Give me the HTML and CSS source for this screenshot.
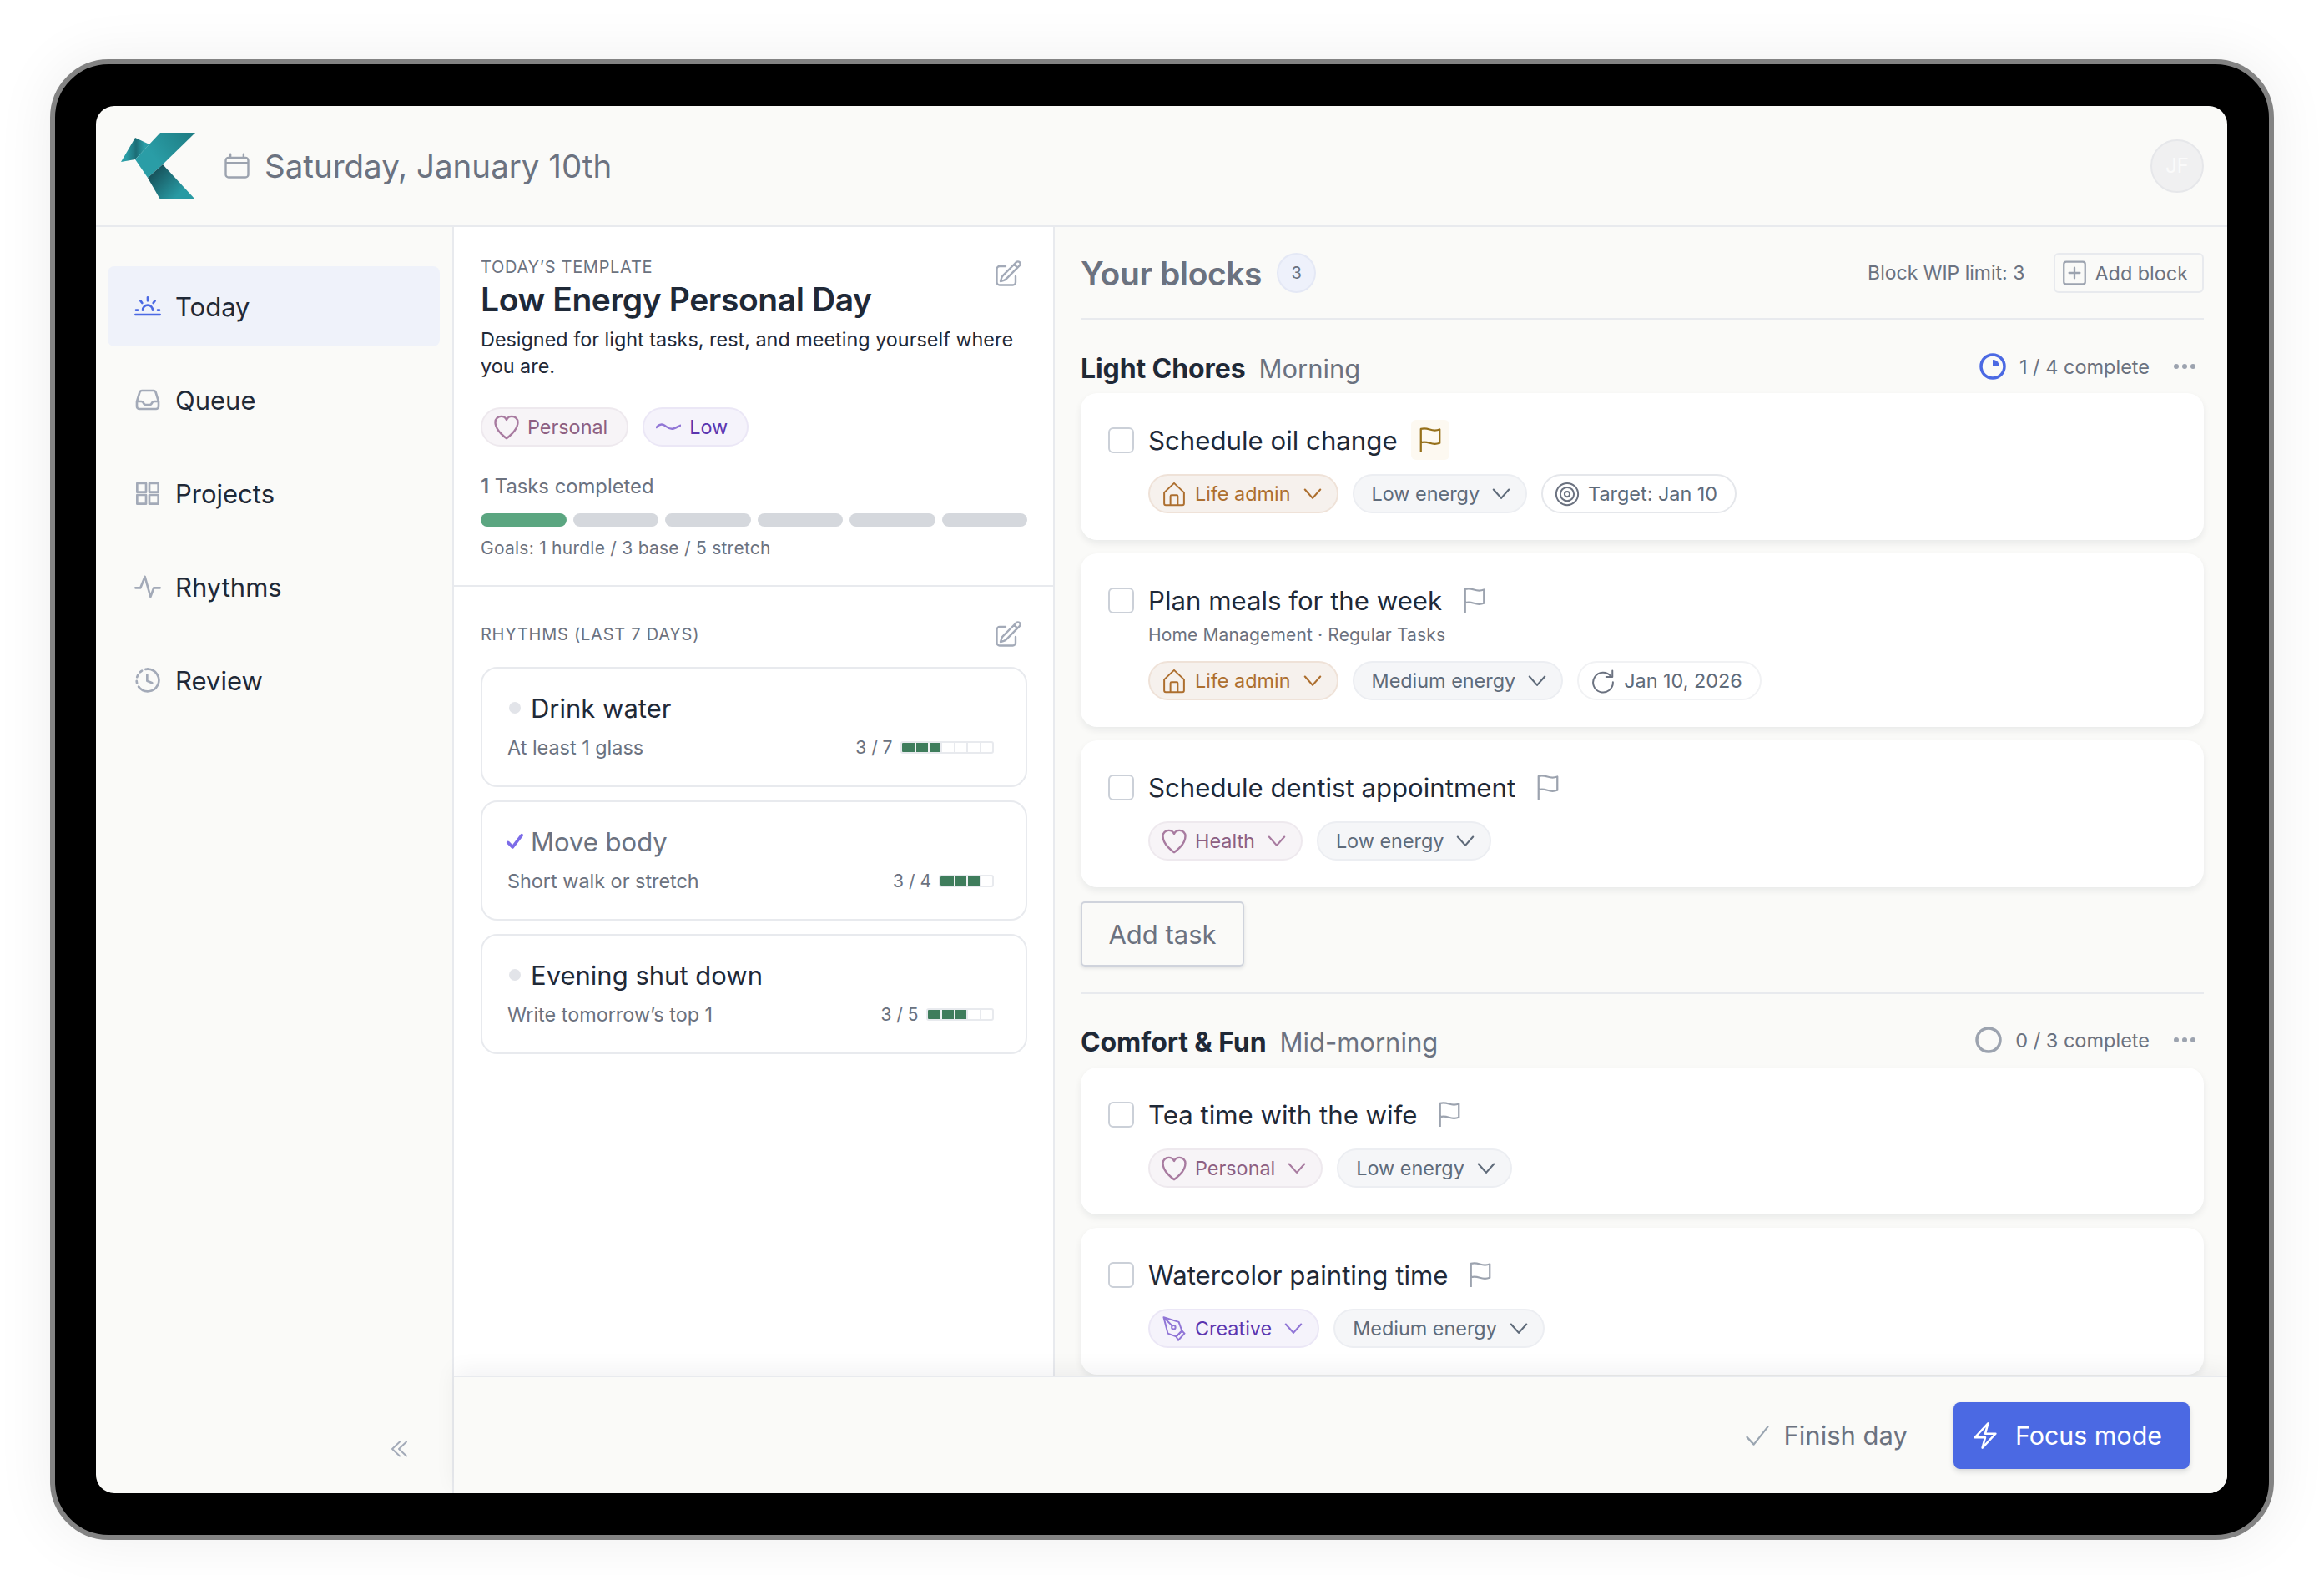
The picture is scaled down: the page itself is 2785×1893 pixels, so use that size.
FILE: index.html
```html
<!DOCTYPE html>
<html lang="en">
<head>
    <meta charset="UTF-8">
    <meta name="viewport" content="width=device-width, initial-scale=1.0">
    <title>Today</title>
    <link rel="stylesheet" href="styles.css">
</head>
<body>

    <!-- Shared icons -->
    <svg class="sprite" xmlns="http://www.w3.org/2000/svg">
        <symbol id="i-calendar" viewBox="0 0 24 24"><path d="M6.75 2.5v2.75M17.25 2.5v2.75M3 18.75V7.5a2.25 2.25 0 012.25-2.25h13.5A2.25 2.25 0 0121 7.5v11.25A2.25 2.25 0 0118.75 21H5.25A2.25 2.25 0 013 18.75zM3 9.5h18"/></symbol>
        <symbol id="i-edit" viewBox="0 0 24 24"><path d="M16.862 4.487l1.687-1.688a1.875 1.875 0 112.652 2.652L10.582 16.07a4.5 4.5 0 01-1.897 1.13L6 18l.8-2.685a4.5 4.5 0 011.13-1.897l8.932-8.931zm0 0L19.5 7.125M18 14v4.75A2.25 2.25 0 0115.75 21H5.25A2.25 2.25 0 013 18.75V8.25A2.25 2.25 0 015.25 6H10"/></symbol>
        <symbol id="i-heart" viewBox="2 2.5 20 20"><path d="M21 8.25c0-2.485-2.099-4.5-4.688-4.5-1.935 0-3.597 1.126-4.312 2.733-.715-1.607-2.377-2.733-4.313-2.733C5.1 3.75 3 5.765 3 8.25c0 7.22 9 13 9 13s9-5.78 9-13z"/></symbol>
        <symbol id="i-wave" viewBox="2 2.5 20 20"><path d="M2.5 12.5c2-2.5 4-3 6.5-1.5s4 3.5 7 2.5c2-.5 3.5-1.5 5.5-2.5"/></symbol>
        <symbol id="i-flag" viewBox="0 0 24 24"><path d="M3 23.5V1.5c3-1 5.500-.5 8.500.5s5.500 1.500 9.500 0V15c-4 1.500-6.500 1-9.500 0s-5.500-1.500-8.500-.5"/></symbol>
        <symbol id="i-home" viewBox="0 0 24 24"><path d="M2.5 10.5L12 1.500l9.500 9V21a1.500 1.500 0 01-1.500 1.500H4A1.500 1.500 0 012.500 21zM8.500 22.500V14a1 1 0 011-1h5a1 1 0 011 1v8.500"/></symbol>
        <symbol id="i-chevron" viewBox="0 0 24 24"><path d="M3.5 7l8.500 9.500L20.500 7"/></symbol>
        <symbol id="i-target" viewBox="0 0 24 24"><circle cx="12" cy="12" r="10.5"/><circle cx="12" cy="12" r="6.5"/><circle cx="12" cy="12" r="2.5"/></symbol>
        <symbol id="i-repeat" viewBox="0 0 24 24"><path d="M19.5 7.500A9.500 9.500 0 1021.500 13M21 2v6h-6"/></symbol>
        <symbol id="i-nib" viewBox="0 0 24 24"><path d="M2 1l14.500 4.500 3 8.500-5.500 5.500-8-3zM2 1l8 8"/><circle cx="11.5" cy="10.5" r="1.8"/><path d="M14 19.500l5.500-5.500 2.500 2.500-6 6.500z"/></symbol>
    </svg>

    <div class="device">
        <div class="screen">

            <header class="topbar">
                <svg class="logo" viewBox="0 0 90 80" xmlns="http://www.w3.org/2000/svg">
                    <defs>
                        <linearGradient id="logo-top" x1="80" y1="0" x2="40" y2="30" gradientUnits="userSpaceOnUse">
                            <stop offset="0" stop-color="#1f7f86"/>
                            <stop offset="1" stop-color="#2a9da6"/>
                        </linearGradient>
                        <linearGradient id="logo-low" x1="38" y1="45" x2="68" y2="75" gradientUnits="userSpaceOnUse">
                            <stop offset="0" stop-color="#164f58"/>
                            <stop offset="1" stop-color="#289aa3"/>
                        </linearGradient>
                        <linearGradient id="logo-fold" x1="6" y1="20" x2="28" y2="20" gradientUnits="userSpaceOnUse">
                            <stop offset="0" stop-color="#2a9da6"/>
                            <stop offset=".55" stop-color="#1c6d76"/>
                            <stop offset="1" stop-color="#2a9da6"/>
                        </linearGradient>
                    </defs>
                    <polygon points="0,35 17,6 34,14 17,32" fill="url(#logo-fold)"/>
                    <polygon points="47,0 89,0 50,38 32,54 17,32" fill="url(#logo-top)"/>
                    <polygon points="50,38 89,80 47,80 32,54" fill="url(#logo-low)"/>
                </svg>
                <svg class="icon date-icon"><use href="#i-calendar"/></svg>
                <span class="date">Saturday, January 10th</span>
                <div class="avatar">JF</div>
            </header>

            <div class="workspace">
                <nav class="sidebar">
                    <a class="nav-item active" href="#">
                        <svg class="nav-icon" viewBox="0 0 24 24"><path d="M1 19.5h22M7.500 15.500a4.500 4.500 0 019 0M12 4v3M5.500 7l1.500 2M18.500 7L17 9M1.500 15.500h1.500M21 15.500h1.500"/></svg>
                        Today
                    </a>
                    <a class="nav-item" href="#">
                        <svg class="nav-icon" viewBox="0 0 24 24"><path d="M2.25 13.5h3.86a2.25 2.25 0 012.012 1.244l.256.512a2.25 2.25 0 002.013 1.244h3.218a2.25 2.25 0 002.013-1.244l.256-.512a2.25 2.25 0 012.013-1.244h3.859m-19.5.338V18a2.25 2.25 0 002.25 2.25h15A2.25 2.25 0 0021.75 18v-4.162c0-.224-.034-.447-.1-.661L19.24 5.338A2.25 2.25 0 0017.088 3.75H6.912a2.25 2.25 0 00-2.15 1.588L2.35 13.177a2.25 2.25 0 00-.1.661z"/></svg>
                        Queue
                    </a>
                    <a class="nav-item" href="#">
                        <svg class="nav-icon" viewBox="0 0 24 24"><rect x="2.5" y="3" width="8" height="8"/><rect x="13.5" y="3" width="8" height="8"/><rect x="2.5" y="13.5" width="8" height="8"/><rect x="13.5" y="13.5" width="8" height="8"/></svg>
                        Projects
                    </a>
                    <a class="nav-item" href="#">
                        <svg class="nav-icon" viewBox="0 0 24 24"><path d="M1 13h4.500L9.500 3l5 18 3-8H23"/></svg>
                        Rhythms
                    </a>
                    <a class="nav-item" href="#">
                        <svg class="nav-icon" viewBox="0 0 24 24"><path d="M12 2a10 10 0 11-8 16"/><path class="dashed" d="M12 2a10 10 0 00-8 16"/><path d="M11.5 7v5.500l4.500 2"/></svg>
                        Review
                    </a>
                    <button class="collapse" type="button">
                        <svg viewBox="0 0 24 24"><path d="M20 20.5l-9-8.500 9-8.500M12 20.500L3 12l9-8.500"/></svg>
                    </button>
                </nav>

                <div class="content">
                    <div class="panels">

                        <aside class="template">
                            <section class="template-top">
                                <div class="label-row">
                                    <span class="label">TODAY&rsquo;S TEMPLATE</span>
                                    <svg class="icon edit-icon"><use href="#i-edit"/></svg>
                                </div>
                                <h1 class="template-title">Low Energy Personal Day</h1>
                                <p class="template-desc">Designed for light tasks, rest, and meeting yourself where you are.</p>
                                <div class="chips">
                                    <span class="chip chip-personal chip-plain"><svg class="chip-icon"><use href="#i-heart"/></svg>Personal</span>
                                    <span class="chip chip-creative chip-plain"><svg class="chip-icon"><use href="#i-wave"/></svg>Low</span>
                                </div>
                                <p class="tasks-done"><strong>1</strong> Tasks completed</p>
                                <div class="goal-bar">
                                    <span class="goal done"></span>
                                    <span class="goal"></span>
                                    <span class="goal"></span>
                                    <span class="goal"></span>
                                    <span class="goal"></span>
                                    <span class="goal"></span>
                                </div>
                                <p class="goals-note">Goals: 1 hurdle / 3 base / 5 stretch</p>
                            </section>

                            <section class="rhythms">
                                <div class="label-row rhythms-head">
                                    <span class="label label-wide">RHYTHMS (LAST 7 DAYS)</span>
                                    <svg class="icon edit-icon"><use href="#i-edit"/></svg>
                                </div>

                                <div class="rhythm">
                                    <div class="rhythm-title"><span class="rhythm-dot"></span>Drink water</div>
                                    <div class="rhythm-foot">
                                        <span class="rhythm-sub">At least 1 glass</span>
                                        <span class="rhythm-count">3 / 7</span>
                                        <span class="cells"><i class="on"></i><i class="on"></i><i class="on"></i><i></i><i></i><i></i><i></i></span>
                                    </div>
                                </div>

                                <div class="rhythm">
                                    <div class="rhythm-title rhythm-done">
                                        <svg class="rhythm-check" viewBox="0 0 24 24"><path d="M3 13.5l6 6L21 4"/></svg>
                                        Move body
                                    </div>
                                    <div class="rhythm-foot">
                                        <span class="rhythm-sub">Short walk or stretch</span>
                                        <span class="rhythm-count">3 / 4</span>
                                        <span class="cells"><i class="on"></i><i class="on"></i><i class="on"></i><i></i></span>
                                    </div>
                                </div>

                                <div class="rhythm">
                                    <div class="rhythm-title"><span class="rhythm-dot"></span>Evening shut down</div>
                                    <div class="rhythm-foot">
                                        <span class="rhythm-sub">Write tomorrow&rsquo;s top 1</span>
                                        <span class="rhythm-count">3 / 5</span>
                                        <span class="cells"><i class="on"></i><i class="on"></i><i class="on"></i><i></i><i></i></span>
                                    </div>
                                </div>
                            </section>
                        </aside>

                        <main class="blocks">
                            <div class="blocks-head">
                                <h2 class="blocks-title">Your blocks</h2>
                                <span class="blocks-count">3</span>
                                <span class="wip">Block WIP limit: 3</span>
                                <button class="add-block" type="button">
                                    <svg class="icon" viewBox="0 0 24 24"><rect x="3" y="2.5" width="18" height="19" rx="2"/><path d="M12 7.5v9M7.500 12h9"/></svg>
                                    Add block
                                </button>
                            </div>

                            <!-- Light Chores -->
                            <section class="block">
                                <div class="block-head">
                                    <h3 class="block-name">Light Chores</h3>
                                    <span class="block-time">Morning</span>
                                    <svg class="progress progress-on" viewBox="0 0 32 32"><circle cx="16" cy="16" r="14"/><path d="M16 8a8 8 0 018 8h-8z"/></svg>
                                    <span class="block-status">1 / 4 complete</span>
                                    <span class="more"><i></i><i></i><i></i></span>
                                </div>

                                <div class="task">
                                    <div class="task-main">
                                        <span class="checkbox"></span>
                                        <span class="task-title">Schedule oil change</span>
                                        <span class="flag flag-on"><svg class="flag-icon"><use href="#i-flag"/></svg></span>
                                    </div>
                                    <div class="chips task-chips">
                                        <span class="chip chip-life"><svg class="chip-icon"><use href="#i-home"/></svg>Life admin<svg class="chevron"><use href="#i-chevron"/></svg></span>
                                        <span class="chip chip-energy">Low energy<svg class="chevron"><use href="#i-chevron"/></svg></span>
                                        <span class="chip chip-date"><svg class="chip-icon"><use href="#i-target"/></svg>Target: Jan 10</span>
                                    </div>
                                </div>

                                <div class="task">
                                    <div class="task-main">
                                        <span class="checkbox"></span>
                                        <span class="task-title">Plan meals for the week</span>
                                        <span class="flag"><svg class="flag-icon"><use href="#i-flag"/></svg></span>
                                    </div>
                                    <p class="task-sub">Home Management &middot; Regular Tasks</p>
                                    <div class="chips">
                                        <span class="chip chip-life"><svg class="chip-icon"><use href="#i-home"/></svg>Life admin<svg class="chevron"><use href="#i-chevron"/></svg></span>
                                        <span class="chip chip-energy">Medium energy<svg class="chevron"><use href="#i-chevron"/></svg></span>
                                        <span class="chip chip-date chip-faint"><svg class="chip-icon"><use href="#i-repeat"/></svg>Jan 10, 2026</span>
                                    </div>
                                </div>

                                <div class="task">
                                    <div class="task-main">
                                        <span class="checkbox"></span>
                                        <span class="task-title">Schedule dentist appointment</span>
                                        <span class="flag"><svg class="flag-icon"><use href="#i-flag"/></svg></span>
                                    </div>
                                    <div class="chips task-chips">
                                        <span class="chip chip-personal"><svg class="chip-icon"><use href="#i-heart"/></svg>Health<svg class="chevron"><use href="#i-chevron"/></svg></span>
                                        <span class="chip chip-energy">Low energy<svg class="chevron"><use href="#i-chevron"/></svg></span>
                                    </div>
                                </div>

                                <button class="add-task" type="button">Add task</button>
                            </section>

                            <!-- Comfort & Fun -->
                            <section class="block block-next">
                                <div class="block-head">
                                    <h3 class="block-name">Comfort &amp; Fun</h3>
                                    <span class="block-time">Mid-morning</span>
                                    <svg class="progress" viewBox="0 0 32 32"><circle cx="16" cy="16" r="14"/></svg>
                                    <span class="block-status">0 / 3 complete</span>
                                    <span class="more"><i></i><i></i><i></i></span>
                                </div>

                                <div class="task">
                                    <div class="task-main">
                                        <span class="checkbox"></span>
                                        <span class="task-title">Tea time with the wife</span>
                                        <span class="flag"><svg class="flag-icon"><use href="#i-flag"/></svg></span>
                                    </div>
                                    <div class="chips task-chips">
                                        <span class="chip chip-personal"><svg class="chip-icon"><use href="#i-heart"/></svg>Personal<svg class="chevron"><use href="#i-chevron"/></svg></span>
                                        <span class="chip chip-energy">Low energy<svg class="chevron"><use href="#i-chevron"/></svg></span>
                                    </div>
                                </div>

                                <div class="task">
                                    <div class="task-main">
                                        <span class="checkbox"></span>
                                        <span class="task-title">Watercolor painting time</span>
                                        <span class="flag"><svg class="flag-icon"><use href="#i-flag"/></svg></span>
                                    </div>
                                    <div class="chips task-chips">
                                        <span class="chip chip-creative"><svg class="chip-icon"><use href="#i-nib"/></svg>Creative<svg class="chevron"><use href="#i-chevron"/></svg></span>
                                        <span class="chip chip-energy">Medium energy<svg class="chevron"><use href="#i-chevron"/></svg></span>
                                    </div>
                                </div>
                            </section>
                        </main>
                    </div>

                    <footer class="actions">
                        <button class="finish" type="button">
                            <svg class="finish-icon" viewBox="0 0 24 24"><path d="M2 13.5l6.500 7L22 3.500"/></svg>
                            Finish day
                        </button>
                        <button class="focus" type="button">
                            <svg class="focus-icon" viewBox="0 0 24 24"><path d="M3.75 13.5l10.500-11.250L12 10.500h8.250L9.750 21.750 12 13.500H3.750z"/></svg>
                            Focus mode
                        </button>
                    </footer>
                </div>
            </div>
        </div>
    </div>

</body>
</html>
```

FILE: styles.css
```css
/* Basic Reset */
* {
    margin: 0;
    padding: 0;
    box-sizing: border-box;
}
html, body {
    height: 1893px;
    overflow: hidden;
}
body {
    font-family: Inter, "Noto Sans", sans-serif;
    background-color: #fff;
    color: #1f2937;
    padding: 71px 60px 48px;
}
button {
    font-family: inherit;
    cursor: pointer;
}
a {
    color: inherit;
    text-decoration: none;
}
svg {
    fill: none;
    stroke: currentColor;
    stroke-linecap: round;
    stroke-linejoin: round;
    flex: none;
}
.sprite {
    display: none;
}
.icon {
    stroke-width: 1.6;
}

/* Device frame */
.device {
    width: 2665px;
    height: 1774px;
    padding: 50px 50px 50px 49px;
    background-color: #000;
    border: 6px solid #838383;
    border-radius: 70px;
    box-shadow: 0 0 70px rgba(0, 0, 0, 0.07);
}
.screen {
    display: flex;
    flex-direction: column;
    height: 100%;
    overflow: hidden;
    background-color: #fafaf8;
    border-radius: 22px;
}

/* Top bar */
.topbar {
    display: flex;
    align-items: center;
    height: 145px;
    padding: 0 28px 0 30px;
    border-bottom: 2px solid #e8eaee;
    flex: none;
}
.logo {
    width: 90px;
    height: 80px;
    stroke: none;
}
.date-icon {
    width: 36px;
    height: 36px;
    margin-left: 31px;
    color: #9ca3af;
}
.date {
    margin-left: 15px;
    font-size: 38.5px;
    color: #6b7280;
}
.avatar {
    display: flex;
    align-items: center;
    justify-content: center;
    width: 64px;
    height: 64px;
    margin-left: auto;
    background-color: #f0f0f1;
    border: 2px solid #e6e7ea;
    border-radius: 50%;
    color: #fafafa;
    font-size: 24px;
}

.workspace {
    display: flex;
    flex: 1;
    min-height: 0;
}

/* Sidebar */
.sidebar {
    position: relative;
    display: flex;
    flex-direction: column;
    gap: 16px;
    width: 427px;
    padding: 47px 15px 0 14px;
    flex: none;
}
.nav-item {
    display: flex;
    align-items: center;
    gap: 17px;
    height: 96px;
    padding-left: 32px;
    border-radius: 8px;
    font-size: 31px;
}
.nav-item.active {
    background-color: #eff2fa;
}
.nav-icon {
    width: 32px;
    height: 32px;
    color: #a3aab8;
    stroke-width: 2;
}
.active .nav-icon {
    color: #4b69e3;
}
.dashed {
    stroke-dasharray: 2 3.4;
}
.collapse {
    position: absolute;
    left: 352px;
    bottom: 41px;
    width: 24px;
    height: 24px;
    background: none;
    border: none;
    color: #a3aab8;
}
.collapse svg {
    display: block;
    width: 24px;
    height: 24px;
    stroke-width: 2;
}

.content {
    display: flex;
    flex-direction: column;
    flex: 1;
    min-width: 0;
    border-left: 2px solid #e8eaee;
}
.panels {
    display: flex;
    flex: 1;
    min-height: 0;
}

/* Template column */
.template {
    width: 720px;
    background-color: #fff;
    border-right: 2px solid #e8eaee;
    flex: none;
}
.template-top {
    height: 431px;
    padding: 33px 31px 0 32px;
    border-bottom: 2px solid #e8eaee;
}
.label-row {
    display: flex;
    justify-content: space-between;
    align-items: flex-start;
    height: 30px;
    line-height: 30px;
}
.label {
    font-size: 20px;
    letter-spacing: 0.7px;
    color: #6b7280;
}
.label-wide {
    letter-spacing: 0.75px;
}
.edit-icon {
    width: 36px;
    height: 36px;
    margin: 5px 5px 0 0;
    color: #a3aab8;
}
.template-title {
    font-size: 39px;
    font-weight: 600;
    line-height: 48px;
    letter-spacing: -0.4px;
    color: #1f2937;
}
.template-desc {
    margin-top: 8px;
    font-size: 23.4px;
    line-height: 32px;
}
.chips {
    display: flex;
    gap: 17px;
}
.template-top .chips {
    margin-top: 33px;
}
.tasks-done {
    margin-top: 31px;
    font-size: 23.8px;
    line-height: 34px;
    color: #6b7280;
}
.tasks-done strong {
    font-weight: 600;
}
.goal-bar {
    display: flex;
    gap: 8px;
    margin-top: 15px;
}
.goal {
    flex: 1;
    height: 16px;
    background-color: #d5d8dd;
    border-radius: 8px;
}
.goal.done {
    background-color: #5ba681;
}
.goals-note {
    margin-top: 12px;
    font-size: 21px;
    line-height: 28px;
    letter-spacing: 0.25px;
    color: #6b7280;
}

/* Rhythms */
.rhythms {
    padding: 0 31px 0 32px;
}
.rhythms-head {
    height: 96px;
    padding-top: 42px;
}
.rhythms-head .edit-icon {
    margin-top: -3px;
}
.rhythm {
    height: 144px;
    margin-bottom: 16px;
    padding: 27px 38px 0 30px;
    border: 2px solid #e8eaee;
    border-radius: 20px;
}
.rhythm-title {
    display: flex;
    align-items: center;
    height: 40px;
    font-size: 31px;
}
.rhythm-dot {
    width: 14px;
    height: 14px;
    margin: 0 12px 0 2px;
    background-color: #e2e4e9;
    border-radius: 50%;
}
.rhythm-done {
    color: #6b7280;
}
.rhythm-check {
    width: 22px;
    height: 22px;
    margin: 0 8px 0 -2px;
    color: #7c6ce8;
    stroke-width: 4;
}
.rhythm-foot {
    display: flex;
    align-items: center;
    margin-top: 13px;
}
.rhythm-sub {
    margin-right: auto;
    font-size: 23.4px;
    color: #6b7280;
}
.rhythm-count {
    margin-right: 9px;
    font-size: 21px;
    color: #6b7280;
}
.cells {
    display: flex;
    height: 15px;
    overflow: hidden;
    border: 2px solid #e8eaee;
    border-radius: 3px;
}
.cells i {
    width: 15.5px;
    border-left: 2px solid #e8eaee;
}
.cells i:first-child {
    border-left: none;
}
.cells i.on {
    background-color: #3f7d5c;
    border-left: 2px solid #f1f3f5;
}
.cells i.on:first-child {
    border-left: none;
}

/* Blocks column */
.blocks {
    flex: 1;
    min-width: 0;
    overflow: hidden;
    padding: 31px 28px 0 31px;
}
.blocks-head {
    display: flex;
    align-items: center;
    box-sizing: content-box;
    height: 48px;
    padding-bottom: 30px;
    border-bottom: 2px solid #e8eaee;
}
.blocks-title {
    font-size: 39px;
    font-weight: 600;
    letter-spacing: -0.4px;
    color: #6b7280;
}
.blocks-count {
    display: flex;
    align-items: center;
    justify-content: center;
    width: 47px;
    height: 48px;
    margin-left: 18px;
    background-color: #eef1fb;
    border: 2px solid #e4e8f5;
    border-radius: 50%;
    font-size: 20px;
    color: #6b7280;
}
.wip {
    margin-left: auto;
    font-size: 23px;
    color: #6b7280;
}
.add-block {
    display: flex;
    align-items: center;
    gap: 7px;
    height: 48px;
    margin-left: 35px;
    padding: 0 17px 0 6px;
    background: none;
    border: 2px solid #e8eaee;
    border-radius: 6px;
    font-size: 23.4px;
    color: #6b7280;
}
.add-block svg {
    width: 34px;
    height: 34px;
    color: #9ca3af;
}
.block-head {
    display: flex;
    align-items: center;
    height: 48px;
    margin-top: 34px;
    padding-right: 10px;
}
.block-name {
    font-size: 32px;
    font-weight: 700;
    letter-spacing: -0.1px;
}
.block-time {
    margin-left: 16px;
    margin-right: auto;
    font-size: 31px;
    color: #6b7280;
}
.progress,
.block-status,
.more {
    margin-bottom: 4px;
}
.progress {
    width: 32px;
    height: 32px;
    color: #9ca3af;
    stroke-width: 3.5;
}
.progress path {
    fill: currentColor;
    stroke: none;
}
.progress-on {
    color: #4b69e3;
}
.block-status {
    margin-left: 16px;
    font-size: 23.5px;
    color: #6b7280;
}
.more {
    display: flex;
    gap: 4px;
    margin-left: 29px;
}
.more i {
    width: 6px;
    height: 6px;
    background-color: #9ca3af;
    border-radius: 50%;
}
.block-next {
    margin-top: 31px;
    border-top: 2px solid #e8eaee;
}
.block-next .block-head {
    margin-top: 33px;
    margin-bottom: 7px;
}

/* Task cards */
.task {
    margin-top: 6px;
    margin-bottom: 16px;
    padding: 32px 32px 32px 33px;
    background-color: #fff;
    border-radius: 20px;
    box-shadow: 0 4px 8px rgba(17, 24, 39, 0.07);
}
.task-main {
    display: flex;
    align-items: center;
    height: 48px;
}
.checkbox {
    width: 31px;
    height: 31px;
    margin-right: 17px;
    border: 2.5px solid #cbd0d8;
    border-radius: 6px;
    flex: none;
}
.task-title {
    padding-top: 2px;
    font-size: 31.2px;
}
.flag {
    display: flex;
    align-items: center;
    justify-content: center;
    width: 46px;
    height: 48px;
    margin-left: 16px;
    border-radius: 6px;
    color: #9ca3af;
}
.flag-on {
    background-color: #fdf9f1;
    color: #96701a;
}
.flag-icon {
    width: 30px;
    height: 30px;
    stroke-width: 1.8;
}
.task-sub {
    margin: 4px 0 17px 48px;
    font-size: 21px;
    line-height: 28px;
    letter-spacing: 0.15px;
    color: #6b7280;
}
.task-chips {
    margin-top: 17px;
}
.task .chips {
    margin-left: 48px;
}

/* Chips */
.chip {
    display: inline-flex;
    align-items: center;
    height: 47px;
    padding: 0 16px 0 14px;
    border: 2px solid;
    border-radius: 24px;
    font-size: 23.4px;
    white-space: nowrap;
}
.chip-plain {
    padding-right: 23px;
}
.chip-icon {
    width: 30px;
    height: 30px;
    margin-right: 10px;
    stroke-width: 1.6;
}
.chevron {
    width: 26px;
    height: 26px;
    margin-left: 13px;
    stroke-width: 2;
}
.chip-personal {
    background-color: #f7f4f7;
    border-color: #eee9ee;
    color: #8d5f82;
}
.chip-personal svg {
    color: #a87ba0;
}
.chip-creative {
    background-color: #f5f3fb;
    border-color: #ebe7f6;
    color: #5b35b0;
}
.chip-creative svg {
    color: #9176d6;
}
.chip-life {
    background-color: #f6f1ed;
    border-color: #efe2d8;
    color: #ad6f2f;
}
.chip-energy {
    padding-left: 21px;
    background-color: #f5f6f8;
    border-color: #eceef2;
    color: #5f6b7a;
}
.chip-date {
    padding-right: 21px;
    background-color: #fff;
    border-color: #e5e7eb;
    color: #5f6b7a;
}
.chip-date svg {
    color: #6b7280;
}
.chip-faint {
    border-color: #f1f2f4;
}

.add-task {
    display: block;
    width: 196px;
    height: 78px;
    margin-top: 17px;
    background: none;
    border: 2px solid #cfd3dc;
    border-radius: 5px;
    box-shadow: 0 2px 4px rgba(17, 24, 39, 0.12);
    font-size: 31px;
    color: #6b7280;
}

/* Bottom actions */
.actions {
    position: relative;
    display: flex;
    align-items: center;
    justify-content: flex-end;
    height: 141px;
    padding-right: 45px;
    background-color: #fafaf8;
    border-top: 2px solid #e8eaee;
    box-shadow: 0 -8px 24px rgba(17, 24, 39, 0.05);
    flex: none;
}
.finish {
    display: flex;
    align-items: center;
    gap: 17px;
    margin-right: 55px;
    background: none;
    border: none;
    font-size: 31px;
    color: #6b7280;
}
.finish-icon {
    width: 30px;
    height: 30px;
    color: #9aa5b1;
    stroke-width: 1.8;
}
.focus {
    display: flex;
    align-items: center;
    gap: 18px;
    height: 80px;
    padding: 0 33px 0 20px;
    background-color: #4b69e3;
    border: none;
    border-radius: 8px;
    box-shadow: 0 3px 6px rgba(17, 24, 39, 0.15);
    font-size: 30.4px;
    color: #fff;
}
.focus-icon {
    width: 36px;
    height: 36px;
    stroke-width: 1.7;
}
```
